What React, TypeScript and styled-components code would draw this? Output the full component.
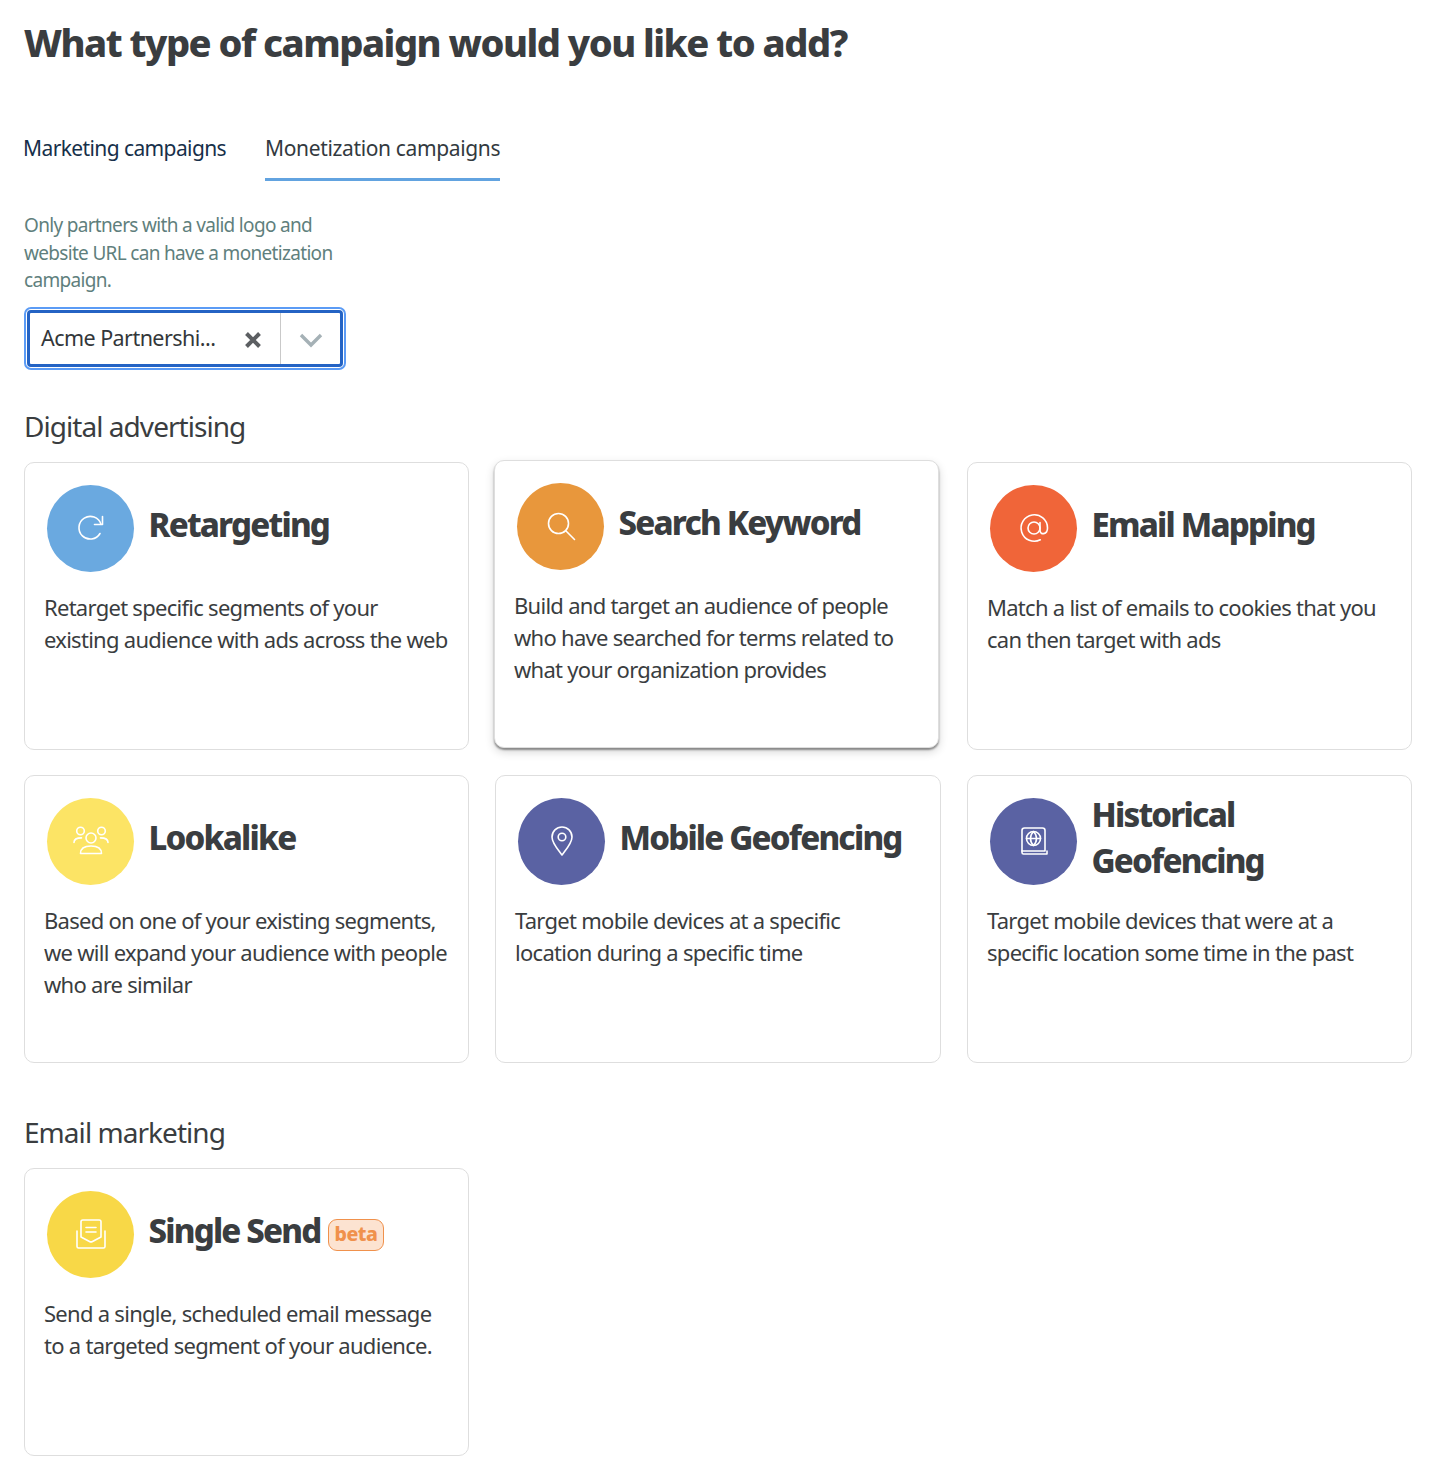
import React from "react";
import styled, { createGlobalStyle } from "styled-components";

const GlobalStyle = createGlobalStyle`
  html, body {
    margin: 0;
    padding: 0;
    background: #ffffff;
    font-family: "Noto Sans", "Open Sans", sans-serif;
    color: #3a3d40;
  }
  * { box-sizing: border-box; }
`;

const Page = styled.div`
  width: 1430px;
  height: 1484px;
  padding: 15px 18px 0 24px;
`;

const Title = styled.h1`
  margin: 0;
  font-size: 38px;
  line-height: 54px;
  font-weight: 800;
  letter-spacing: -1.5px;
  color: #3a3d40;
`;

const Tabs = styled.div`
  display: flex;
  gap: 39px;
  margin: 57px 0 0 -1px;
`;

const Tab = styled.div<{ $active?: boolean }>`
  height: 55px;
  padding-top: 7px;
  font-size: 21px;
  line-height: 30px;
  letter-spacing: ${(p) => (p.$active ? "-0.36px" : "-0.6px")};
  color: ${(p) => (p.$active ? "#333a40" : "#17304a")};
  border-bottom: 3px solid ${(p) => (p.$active ? "#62a3e0" : "transparent")};
`;

const Hint = styled.p`
  width: 330px;
  margin: 31px 0 0;
  font-size: 19px;
  line-height: 27.5px;
  letter-spacing: -0.68px;
  color: #5f7f7d;
`;

const SelectRing = styled.div`
  width: 322px;
  height: 63px;
  margin-top: 12.5px;
  padding: 1px;
  border: 2px solid #5b9bf5;
  border-radius: 7px;
`;

const Select = styled.div`
  display: flex;
  align-items: center;
  height: 100%;
  border: 3px solid #2463c4;
  border-radius: 4px;
  background: #fff;
`;

const SelectValue = styled.span`
  flex: 1;
  padding: 0 0 3px 11px;
  font-size: 21.5px;
  letter-spacing: -0.55px;
  color: #33373a;
  white-space: nowrap;
`;

const ClearButton = styled.span`
  display: flex;
  width: 57px;
  justify-content: center;
  padding: 2px 0 0 2px;
  color: #5c5f62;
`;

const Toggle = styled.span`
  display: flex;
  align-items: center;
  justify-content: center;
  width: 60px;
  height: 100%;
  padding-top: 2px;
  border-left: 1px solid #c9c9c9;
  color: #a5b1b6;
`;

const SectionTitle = styled.h2<{ $gap: number }>`
  margin: ${(p) => p.$gap}px 0 0;
  font-size: 28px;
  line-height: 40px;
  font-weight: 400;
  letter-spacing: -0.95px;
  color: #3a3d40;
`;

const Grid = styled.div`
  display: grid;
  grid-template-columns: 445px 446px 445px;
  grid-auto-rows: 288px;
  column-gap: 26px;
  row-gap: 25px;
  width: 1388px;
  margin-top: 16px;
`;

const Card = styled.div<{ $raised?: boolean }>`
  padding: 22px 19px 0;
  border: 1px solid #dedede;
  border-radius: 10px;
  background: #fff;
  ${(p) =>
    p.$raised &&
    `
    margin-right: 1px;
    transform: translate(-1px, -2px);
    box-shadow: 0 2px 2px rgba(0, 0, 0, 0.4), 0 4px 10px rgba(0, 0, 0, 0.16);
  `}
`;

const CardHead = styled.div`
  display: flex;
  align-items: center;
  gap: 14.5px;
  padding-left: 3px;
  height: 87px;
`;

const IconCircle = styled.div<{ $color: string }>`
  flex: none;
  display: flex;
  align-items: center;
  justify-content: center;
  width: 87px;
  height: 87px;
  border-radius: 50%;
  background: ${(p) => p.$color};
  color: #fff;
`;

const CardTitle = styled.h3`
  display: flex;
  align-items: center;
  margin: -7px 0 0;
  font-size: 33px;
  line-height: 46px;
  font-weight: 800;
  letter-spacing: -1.8px;
  color: #3a3d40;
`;

const Beta = styled.span`
  margin: 8px 0 0 7px;
  padding: 0 6px;
  height: 32px;
  border: 1.5px solid #f0914c;
  border-radius: 9px;
  background: #fce3d1;
  color: #f0914c;
  font-size: 19.5px;
  line-height: 28px;
  letter-spacing: -0.5px;
`;

const CardText = styled.p`
  margin: 19px 0 0;
  font-size: 22px;
  line-height: 32px;
  letter-spacing: -0.72px;
  color: #3a3d40;
`;

const iconProps = {
  width: 32,
  height: 32,
  viewBox: "0 0 32 32",
  fill: "none",
  stroke: "currentColor",
  strokeWidth: 1.6,
  strokeLinecap: "round" as const,
  strokeLinejoin: "round" as const,
};

const RefreshIcon = () => (
  <svg {...iconProps}>
    <path d="M25 21.5a11.3 11.3 0 1 1 1-9.3" />
    <path d="M27.5 4.5v8h-8" />
  </svg>
);

const SearchIcon = () => (
  <svg {...iconProps}>
    <circle cx="13.5" cy="13.5" r="10" />
    <path d="M20.8 20.8 29.5 29.5" />
  </svg>
);

const AtIcon = () => (
  <svg {...iconProps}>
    <circle cx="16" cy="16" r="6" />
    <path d="M22 10.5v7.7c0 5.2 7.5 4.6 7.5-2.2a13.2 13.2 0 1 0-7.2 11.8" />
  </svg>
);

const PeopleIcon = () => (
  <svg {...iconProps} width={36} height={36} viewBox="0 0 36 36">
    <circle cx="7.5" cy="8" r="3.8" />
    <circle cx="28.5" cy="8" r="3.8" />
    <circle cx="18" cy="15" r="5" />
    <path d="M1 19.5c0-3.2 2.5-4.6 7.5-4.6" />
    <path d="M35 19.5c0-3.2-2.5-4.6-7.5-4.6" />
    <path d="M7.5 30.5c0-5 4-7.5 10.5-7.5s10.5 2.5 10.5 7.5z" />
  </svg>
);

const PinIcon = () => (
  <svg {...iconProps}>
    <path d="M16 30C11 23.5 6 18 6 12a10 10 0 0 1 20 0c0 6-5 11.5-10 18z" />
    <circle cx="16" cy="12" r="3.8" />
  </svg>
);

const GlobeBookIcon = () => (
  <svg {...iconProps}>
    <path d="M4 26V5.5A2.5 2.5 0 0 1 6.5 3h18A2.5 2.5 0 0 1 27 5.5V26z" />
    <path d="M4 26v1.5A1.500 1.500 0 0 0 5.500 29H29v-3" />
    <circle cx="15.5" cy="13.5" r="7" />
    <path d="M8.5 13.5h14M15.5 6.5c-4 4-4 10 0 14M15.5 6.5c4 4 4 10 0 14" />
  </svg>
);

const OpenMailIcon = () => (
  <svg {...iconProps}>
    <path d="M6 19V3.8A1.8 1.8 0 0 1 7.8 2h16.4A1.8 1.8 0 0 1 26 3.8V19l-8.500 4.500a3 3 0 0 1-3 0z" />
    <path d="M2 13v15.500A1.500 1.500 0 0 0 3.500 30h25a1.500 1.500 0 0 0 1.500-1.500V13" />
    <path d="M11 9.5h10M11 14h10" />
  </svg>
);

type CardData = {
  title: string;
  text: string;
  color: string;
  icon: React.ReactNode;
  raised?: boolean;
  beta?: boolean;
};

const digital: CardData[] = [
  {
    title: "Retargeting",
    text: "Retarget specific segments of your existing audience with ads across the web",
    color: "#6aa9e0",
    icon: <RefreshIcon />,
  },
  {
    title: "Search Keyword",
    text: "Build and target an audience of people who have searched for terms related to what your organization provides",
    color: "#e8973c",
    icon: <SearchIcon />,
    raised: true,
  },
  {
    title: "Email Mapping",
    text: "Match a list of emails to cookies that you can then target with ads",
    color: "#f06539",
    icon: <AtIcon />,
  },
  {
    title: "Lookalike",
    text: "Based on one of your existing segments, we will expand your audience with people who are similar",
    color: "#fce465",
    icon: <PeopleIcon />,
  },
  {
    title: "Mobile Geofencing",
    text: "Target mobile devices at a specific location during a specific time",
    color: "#5a62a3",
    icon: <PinIcon />,
  },
  {
    title: "Historical Geofencing",
    text: "Target mobile devices that were at a specific location some time in the past",
    color: "#5a62a3",
    icon: <GlobeBookIcon />,
  },
];

const email: CardData[] = [
  {
    title: "Single Send",
    text: "Send a single, scheduled email message to a targeted segment of your audience.",
    color: "#f8d847",
    icon: <OpenMailIcon />,
    beta: true,
  },
];

const CampaignCard = ({ data }: { data: CardData }) => (
  <Card $raised={data.raised}>
    <CardHead>
      <IconCircle $color={data.color}>{data.icon}</IconCircle>
      <CardTitle>
        {data.title}
        {data.beta && <Beta>beta</Beta>}
      </CardTitle>
    </CardHead>
    <CardText>{data.text}</CardText>
  </Card>
);

const App = () => (
  <Page>
    <GlobalStyle />
    <Title>What type of campaign would you like to add?</Title>
    <Tabs>
      <Tab>Marketing campaigns</Tab>
      <Tab $active>Monetization campaigns</Tab>
    </Tabs>
    <Hint>Only partners with a valid logo and website URL can have a monetization campaign.</Hint>
    <SelectRing>
      <Select>
        <SelectValue>Acme Partnershi...</SelectValue>
        <ClearButton>
          <svg width="18" height="18" viewBox="0 0 18 18" fill="none" stroke="currentColor" strokeWidth="4">
            <path d="M2.5 2.5l13 13M15.5 2.5l-13 13" />
          </svg>
        </ClearButton>
        <Toggle>
          <svg width="24" height="16" viewBox="0 0 24 16" fill="none" stroke="currentColor" strokeWidth="3.4">
            <path d="M2 3l10 10L22 3" />
          </svg>
        </Toggle>
      </Select>
    </SelectRing>
    <SectionTitle $gap={35.5}>Digital advertising</SectionTitle>
    <Grid>
      {digital.map((d) => (
        <CampaignCard key={d.title} data={d} />
      ))}
    </Grid>
    <SectionTitle $gap={49}>Email marketing</SectionTitle>
    <Grid>
      {email.map((d) => (
        <CampaignCard key={d.title} data={d} />
      ))}
    </Grid>
  </Page>
);

export default App;
